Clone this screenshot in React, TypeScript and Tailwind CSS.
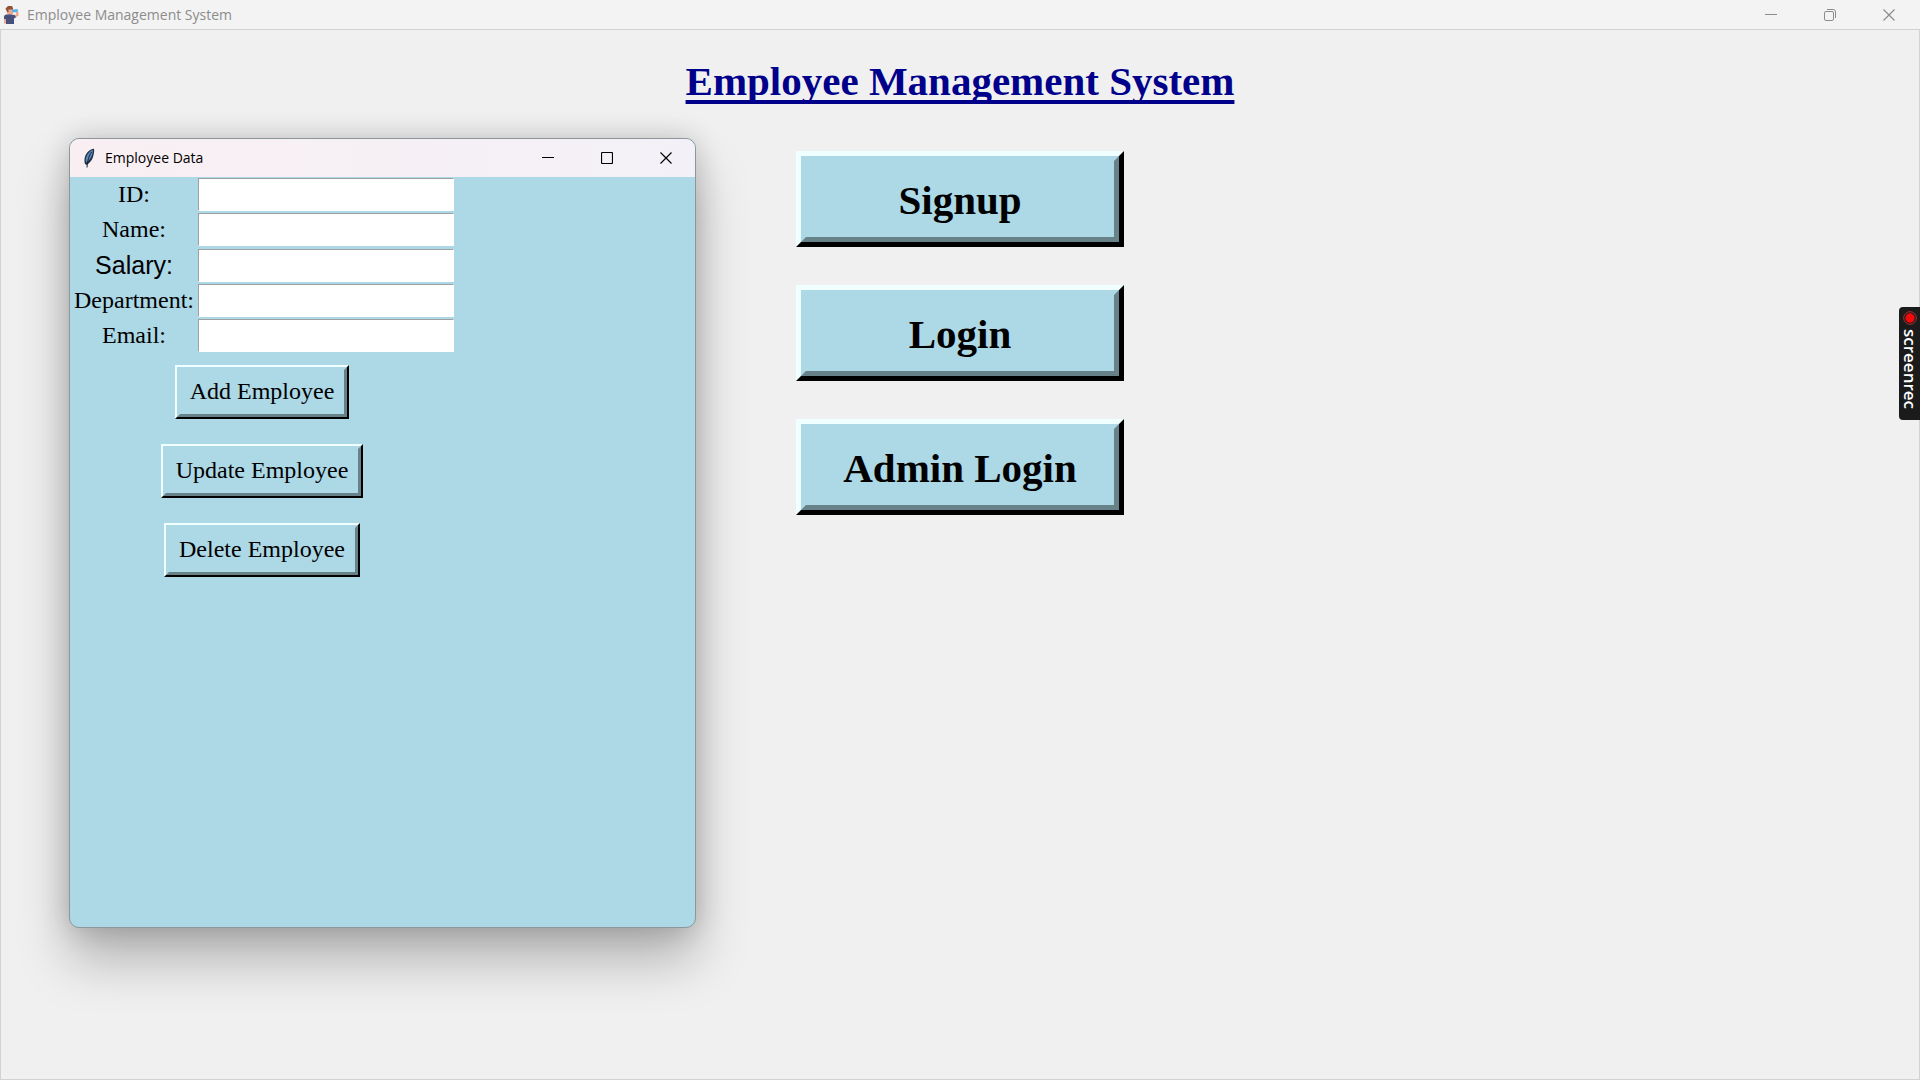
import { useId } from "react";
import type { ReactNode } from "react";

const actions = ["Signup", "Login", "Admin Login"];
const employeeActions = ["Add Employee", "Update Employee", "Delete Employee"];

const fields = [
  { label: "ID:", sans: false },
  { label: "Name:", sans: false },
  { label: "Salary:", sans: true },
  { label: "Department:", sans: false },
  { label: "Email:", sans: false },
];

function PersonIcon() {
  return (
    <svg viewBox="0 0 16 20" className="h-5 w-4" aria-hidden="true">
      <path d="M4 4h6v4.500l-2 2H5L4 8z" fill="#f0a68c" />
      <path d="M2.500 3.500 5 1h4l1 2v1.500H5.500V7H4z" fill="#8f5138" />
      <path d="M1 12v6.500h2V12z" fill="#f0a68c" />
      <path d="M1 12c0-2 1.500-2.500 4-2.500h3l4 .5 1.500 2-2.500 1.500V19H3v-5H1z" fill="#48507c" />
      <path d="M12.500 6.500 15 5.500l.8 5-2.800 1.500-1.500-2 1.800-.8z" fill="#f0a68c" />
      <path d="M8.500 6 10 4.500l4.500-.5.5 2.500-4.500 1z" fill="#4ab5ec" />
    </svg>
  );
}

function FeatherIcon() {
  return (
    <svg viewBox="0 0 12 20" className="h-5 w-3" aria-hidden="true">
      <path d="M11 .8C8.500.5 4 3.500 2.200 8 1.200 11 1.200 13.500 2 16l1.500 1c3-2 5.500-4.500 6.500-8C11 5.500 11.500 3 11 .8z" fill="#233145" />
      <path d="M9.800 2C7.500 2.500 4.500 5.500 3.300 9c-.6 2-.6 3.500-.3 5.500C6 12.500 8 10 8.900 7.500 9.600 5.500 10 3.500 9.800 2z" fill="#5a8abf" />
      <path d="M8.500 4C6 8 4.500 12 4 19.500" fill="none" stroke="#1a2230" strokeWidth="1" />
    </svg>
  );
}

function WindowControls({ restored, className }: { restored: boolean; className: string }) {
  return (
    <div className={`flex h-full items-center ${className}`}>
      <button type="button" aria-label="Minimize" className="flex h-full items-center justify-center">
        <svg viewBox="0 0 12 12" className="size-3" fill="none" stroke="currentColor" aria-hidden="true">
          <path d="M0 5.500h12" />
        </svg>
      </button>
      <button type="button" aria-label={restored ? "Restore" : "Maximize"} className="flex h-full items-center justify-center">
        <svg viewBox="0 0 12 12" className="size-3" fill="none" stroke="currentColor" aria-hidden="true">
          {restored ? (
            <>
              <rect x="0.5" y="2.500" width="9" height="9" rx="1.500" />
              <path d="M3 .5h6a2.500 2.500 0 0 1 2.500 2.500v6" />
            </>
          ) : (
            <rect x="0.5" y="0.5" width="11" height="11" rx="1" strokeWidth="1.200" />
          )}
        </svg>
      </button>
      <button type="button" aria-label="Close" className="flex h-full items-center justify-center">
        <svg viewBox="0 0 12 12" className="size-3" fill="none" stroke="currentColor" strokeWidth="1.200" aria-hidden="true">
          <path d="M.5.5l11 11M11.500.5l-11 11" />
        </svg>
      </button>
    </div>
  );
}

function LargeButton({ children }: { children: ReactNode }) {
  return (
    <button type="button" className="flex h-24 w-[328px] border-[5px] border-t-[#f0ffff] border-r-black border-b-black border-l-[#f0ffff] bg-[#add8e6]">
      <span className="flex h-full w-full items-center justify-center border-[5px] border-t-[#add8e6] border-r-[#68828a] border-b-[#68828a] border-l-[#add8e6] pt-0.5 text-[41px] leading-none font-bold text-black">
        {children}
      </span>
    </button>
  );
}

function SmallButton({ children }: { children: ReactNode }) {
  return (
    <button type="button" className="flex h-[54px] border-2 border-t-[#f0ffff] border-r-black border-b-black border-l-[#f0ffff] bg-[#add8e6]">
      <span className="flex h-full items-center border-[3px] border-t-[#add8e6] border-r-[#68828a] border-b-[#68828a] border-l-[#add8e6] px-2.5 pb-0.5 text-2xl text-black">
        {children}
      </span>
    </button>
  );
}

function EmployeeWindow() {
  const id = useId();
  return (
    <section
      aria-label="Employee Data"
      className="absolute top-[138px] left-[69px] flex h-[790px] w-[627px] flex-col overflow-hidden rounded-[10px] border border-[#8d979b] bg-[#add8e6] shadow-[0_0_28px_rgba(0,0,0,0.18),0_32px_52px_rgba(0,0,0,0.26)]"
    >
      <header className="flex h-[38px] shrink-0 items-center justify-between bg-linear-to-r from-[#f9eff3] to-[#f3f1f7] pl-[13px] text-black">
        <div className="flex items-center gap-[10px] font-['Open_Sans',sans-serif] text-sm">
          <FeatherIcon />
          <h2>Employee Data</h2>
        </div>
        <WindowControls restored={false} className="[&>button]:w-[59px]" />
      </header>
      <form className="flex w-96 flex-col items-center pt-px">
        <div className="grid w-full grid-cols-[128px_256px] gap-y-0.5">
          {fields.map((field) => (
            <div key={field.label} className="col-span-2 grid grid-cols-subgrid items-center">
              <label
                htmlFor={id + field.label}
                className={
                  field.sans
                    ? "text-center font-['Liberation_Sans',Arial,sans-serif] text-[25px] leading-[34px]"
                    : "pb-0.5 text-center text-2xl leading-[30px]"
                }
              >
                {field.label}
              </label>
              <input
                id={id + field.label}
                type="text"
                className="h-[33px] w-full border border-t-[#a0a0a0] border-r-white border-b-white border-l-[#a0a0a0] bg-white px-1 text-2xl outline-none"
              />
            </div>
          ))}
        </div>
        <div className="flex flex-col items-center gap-[25px] pt-[13px]">
          {employeeActions.map((label) => (
            <SmallButton key={label}>{label}</SmallButton>
          ))}
        </div>
      </form>
    </section>
  );
}

export default function App() {
  return (
    <div className="relative flex min-h-screen flex-col overflow-hidden bg-[#f0f0f0] font-['Liberation_Serif','Times_New_Roman',serif]">
      <header className="flex h-[29px] shrink-0 items-center justify-between bg-[#f3f3f3] pl-[3px] text-[#8c8c8c]">
        <div className="flex items-center gap-2 font-['Open_Sans',sans-serif] text-sm">
          <PersonIcon />
          <span>Employee Management System</span>
        </div>
        <WindowControls restored className="pr-0.5 [&>button]:w-[59px]" />
      </header>
      <main className="flex flex-1 flex-col items-center border border-[#d2d2d2] pt-[29px]">
        <h1 className="text-[41px] leading-[44px] font-bold text-[#00008b] underline decoration-4 underline-offset-[5px] [text-decoration-skip-ink:none]">
          Employee Management System
        </h1>
        <div className="flex flex-col gap-[38px] pt-12">
          {actions.map((label) => (
            <LargeButton key={label}>{label}</LargeButton>
          ))}
        </div>
      </main>
      <EmployeeWindow />
      <button
        type="button"
        className="absolute top-[307px] right-0 flex h-[113px] w-[21px] flex-col items-center gap-1 rounded-l bg-[#1b1b1b] pt-1 font-['Open_Sans',sans-serif] text-white"
      >
        <svg viewBox="0 0 14 14" className="size-[14px] shrink-0" aria-hidden="true">
          <circle cx="7" cy="7" r="6.300" fill="none" stroke="#d33" strokeWidth="0.8" />
          <circle cx="7" cy="7" r="4.700" fill="#f00b0b" />
        </svg>
        <span className="text-[17px] leading-5 font-semibold [writing-mode:vertical-rl]">screenrec</span>
      </button>
    </div>
  );
}
